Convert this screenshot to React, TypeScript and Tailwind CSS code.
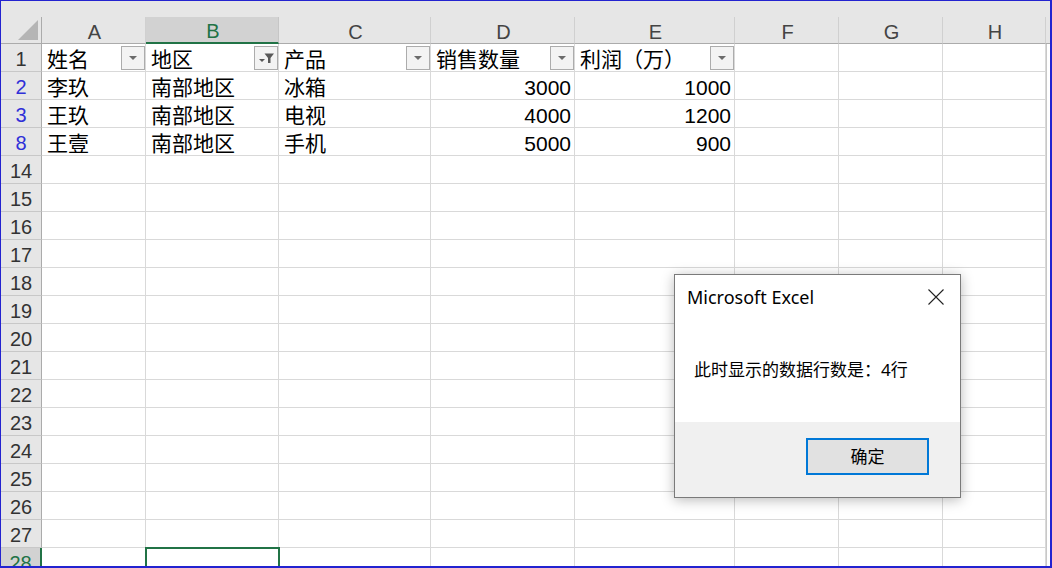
const FONT = { fontFamily: '"Liberation Sans", "Noto Sans CJK SC", sans-serif' };
const UI_FONT = { fontFamily: '"Noto Sans", "Noto Sans CJK SC", sans-serif' };

const columns = [
  { key: 'A', w: 'w-[104px]' },
  { key: 'B', w: 'w-[133px]' },
  { key: 'C', w: 'w-[152px]' },
  { key: 'D', w: 'w-[144px]' },
  { key: 'E', w: 'w-[160px]' },
  { key: 'F', w: 'w-[104px]' },
  { key: 'G', w: 'w-[104px]' },
  { key: 'H', w: 'w-[103px]' },
];

interface Row {
  n: string;
  blue?: boolean;
  header?: boolean;
  cells: string[];
}

const rows: Row[] = [
  { n: '1', header: true, cells: ['姓名', '地区', '产品', '销售数量', '利润（万）'] },
  { n: '2', blue: true, cells: ['李玖', '南部地区', '冰箱', '3000', '1000'] },
  { n: '3', blue: true, cells: ['王玖', '南部地区', '电视', '4000', '1200'] },
  { n: '8', blue: true, cells: ['王壹', '南部地区', '手机', '5000', '900'] },
  ...Array.from({ length: 15 }, (_, i) => ({ n: String(14 + i), cells: [] as string[] })),
];

const FilterButton = ({ active }: { active?: boolean }) => (
  <div className="absolute right-0 top-[2px] w-[24px] h-[24px] border border-[#acacac] bg-[#f3f3f3] flex items-center justify-center">
    {active ? (
      <svg width="20" height="20" viewBox="0 0 20 20">
        <polygon points="3,11 9,11 6,14" fill="#595959" />
        <polygon points="8.5,5.5 18,5.5 14.5,10 14.5,15 12,15 12,10" fill="#595959" />
      </svg>
    ) : (
      <svg width="12" height="8" viewBox="0 0 12 8">
        <polygon points="2,2 10,2 6,6" fill="#6b6b6b" />
      </svg>
    )}
  </div>
);

export default function App() {
  return (
    <div
      className="relative w-[1052px] h-[568px] overflow-hidden bg-white border-t border-l border-r-2 border-b-2 border-[#2323d0]"
      style={FONT}
    >
      {/* strip above column headers */}
      <div className="h-[16px] bg-[#e6e6e6]" />

      {/* column headers */}
      <div className="flex h-[27px] bg-[#e6e6e6]">
        <div className="relative w-[41px] h-full border-r border-b border-[#ababab]">
          <svg className="absolute right-[3px] bottom-[3px]" width="20" height="20" viewBox="0 0 20 20">
            <polygon points="20,0 20,20 0,20" fill="#b5b5b5" />
          </svg>
        </div>
        {columns.map(c => (
          <div
            key={c.key}
            className={`${c.w} h-full flex items-center justify-center pt-[3px] pl-[2px] text-[20px] ${
              c.key === 'B'
                ? 'bg-[#d2d2d2] text-[#217346] border-b-2 border-b-[#217346] border-r border-r-[#c6c6c6]'
                : 'text-[#444] border-b border-b-[#ababab] border-r border-r-[#d0d0d0]'
            }`}
          >
            {c.key}
          </div>
        ))}
        <div className="flex-1 h-full border-b border-[#ababab]" />
      </div>

      {/* rows */}
      {rows.map((r, ri) => {
        const last = ri === rows.length - 1;
        return (
          <div key={r.n} className="flex h-[28px]">
            <div
              className={`w-[41px] h-full flex items-center justify-center pt-[3px] text-[20px] border-b border-b-[#c8c8c8] ${
                last
                  ? 'bg-[#d2d2d2] text-[#217346] border-r-2 border-r-[#217346]'
                  : `bg-[#e6e6e6] border-r border-r-[#ababab] ${r.blue ? 'text-[#3030d8]' : 'text-[#333]'}`
              }`}
            >
              {r.n}
            </div>
            {columns.map((c, ci) => {
              const text = r.cells[ci] ?? '';
              const numeric = !r.header && (ci === 3 || ci === 4);
              const selected = last && c.key === 'B';
              return (
                <div
                  key={c.key}
                  className={`${c.w} relative h-full flex items-center pt-[3px] px-[5px] text-[21px] text-black border-r border-b border-[#d9d9d9] ${
                    numeric ? 'justify-end pr-[3px]' : ''
                  }`}
                >
                  <span className="whitespace-nowrap leading-none">{text}</span>
                  {r.header && ci < 5 && <FilterButton active={ci === 1} />}
                  {selected && (
                    <div className="absolute -left-[1px] -top-[1px] w-[135px] h-[30px] border-2 border-[#217346]" />
                  )}
                </div>
              );
            })}
            <div className="flex-1 h-full border-l border-[#c8c8c8]" />
          </div>
        );
      })}

      {/* message box */}
      <div
        className="absolute left-[673px] top-[273px] w-[287px] h-[224px] flex flex-col bg-white border border-[#7a7a7a] shadow-[0_2px_12px_rgba(0,0,0,0.28)]"
        style={UI_FONT}
      >
        <div className="h-[44px] flex items-center justify-between pl-[12px] pr-[16px]">
          <span className="text-[18px] text-black">Microsoft Excel</span>
          <svg width="16" height="16" viewBox="0 0 16 16">
            <path d="M0.5 0.5 L15.5 15.5 M15.5 0.5 L0.5 15.5" stroke="#222" strokeWidth="1.1" fill="none" />
          </svg>
        </div>
        <div className="flex-1 flex items-center pl-[19px] text-[17px] text-black pb-[2px]">
          此时显示的数据行数是：4行
        </div>
        <div className="h-[75px] bg-[#f0f0f0] flex justify-end items-start pt-[16px] pr-[31px]">
          <div className="w-[123px] h-[37px] border-2 border-[#0078d7] bg-[#e1e1e1] flex items-center justify-center text-[17px] text-black">
            确定
          </div>
        </div>
      </div>
    </div>
  );
}
